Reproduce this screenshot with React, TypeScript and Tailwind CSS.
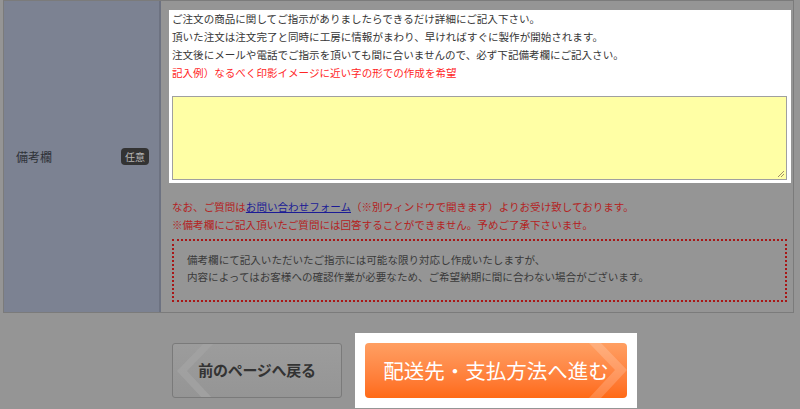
export default function App() {
  const jp = { fontFamily: '"Noto Sans CJK JP", "Noto Sans", sans-serif' };
  return (
    <div className="w-[800px] h-[409px] bg-[#959595] overflow-hidden" style={jp}>
      {/* 備考欄 row */}
      <div className="flex ml-[3px] w-[791px] h-[313px] border-l border-r border-b border-t border-[#7b7b7b]">
        <div className="w-[157px] bg-[#7c8292] border-r-2 border-[#6d7281] flex items-center justify-between pl-[12px] pr-[10px]">
          <span className="text-[12px] text-[#2f3238]">備考欄</span>
          <span className="bg-[#333333] text-[#b5b5b5] text-[10px] leading-[17px] px-[4px] rounded-[4px]">任意</span>
        </div>
        <div className="flex-1 pt-[9px] pl-[8px] pr-[2px]">
          <div className="bg-white pl-[3px] pr-[4px] pb-[3px] text-[10.55px] leading-[18px] text-[#363636]">
            <p>ご注文の商品に関してご指示がありましたらできるだけ詳細にご記入下さい。</p>
            <p>頂いた注文は注文完了と同時に工房に情報がまわり、早ければすぐに製作が開始されます。</p>
            <p>注文後にメールや電話でご指示を頂いても間に合いませんので、必ず下記備考欄にご記入さい。</p>
            <p className="text-[#ff2626]">記入例）なるべく印影イメージに近い字の形での作成を希望</p>
            <div className="relative mt-[14px] h-[84px] bg-[#ffffa5] border border-[#a0a0a0]">
              <svg className="absolute right-[1px] bottom-[1px]" width="9" height="9" viewBox="0 0 9 9">
                <path d="M8 2 L2 8 M8 5 L5 8" stroke="#a08c6a" strokeWidth="1" />
              </svg>
            </div>
          </div>
          <div className="ml-[3px] mt-[15px] text-[10.55px] leading-[18px] text-[#b42222]">
            <p>
              なお、ご質問は<span className="text-[#1b1b96] underline">お問い合わせフォーム</span>（※別ウィンドウで開きます）よりお受け致しております。
            </p>
            <p>※備考欄にご記入頂いたご質問には回答することができません。予めご了承下さいませ。</p>
          </div>
          <div className="ml-[3px] mr-[4px] mt-[5px] h-[63px] border-2 border-dotted border-[#a81616] pl-[13px] pt-[10px] text-[10.55px] leading-[17px] text-[#3a3a3a]">
            <p>備考欄にて記入いただいたご指示には可能な限り対応し作成いたしますが、</p>
            <p>内容によってはお客様への確認作業が必要なため、ご希望納期に間に合わない場合がございます。</p>
          </div>
        </div>
      </div>

      {/* buttons */}
      <div className="flex items-center mt-[20px] ml-[172px] gap-[13px]">
        <div className="relative w-[170px] h-[55px] rounded-[3px] border border-[#7a7a7a] bg-gradient-to-b from-[#9c9c9c] to-[#959595] flex items-center justify-center overflow-hidden">
          <svg className="absolute left-0 top-0" width="40" height="55" viewBox="0 0 40 55">
            <path d="M30 0 L4 27 L30 55 L40 55 L14 27 L40 0 Z" fill="#a3a3a3" opacity="0.8" />
          </svg>
          <span className="relative text-[15px] font-bold text-[#333333] tracking-[-0.3px]">前のページへ戻る</span>
        </div>
        <div className="bg-white p-[10px]">
          <div className="relative w-[262px] h-[55px] rounded-[4px] bg-gradient-to-b from-[#ff9f62] to-[#ff6a14] flex items-center justify-center overflow-hidden">
            <svg className="absolute right-0 top-0" width="44" height="55" viewBox="0 0 44 55">
              <path d="M6 0 L32 27 L6 55 L18 55 L44 27 L18 0 Z" fill="#ffffff" opacity="0.18" />
            </svg>
            <span className="relative text-[20.5px] text-white">配送先・支払方法へ進む</span>
          </div>
        </div>
      </div>
    </div>
  );
}
